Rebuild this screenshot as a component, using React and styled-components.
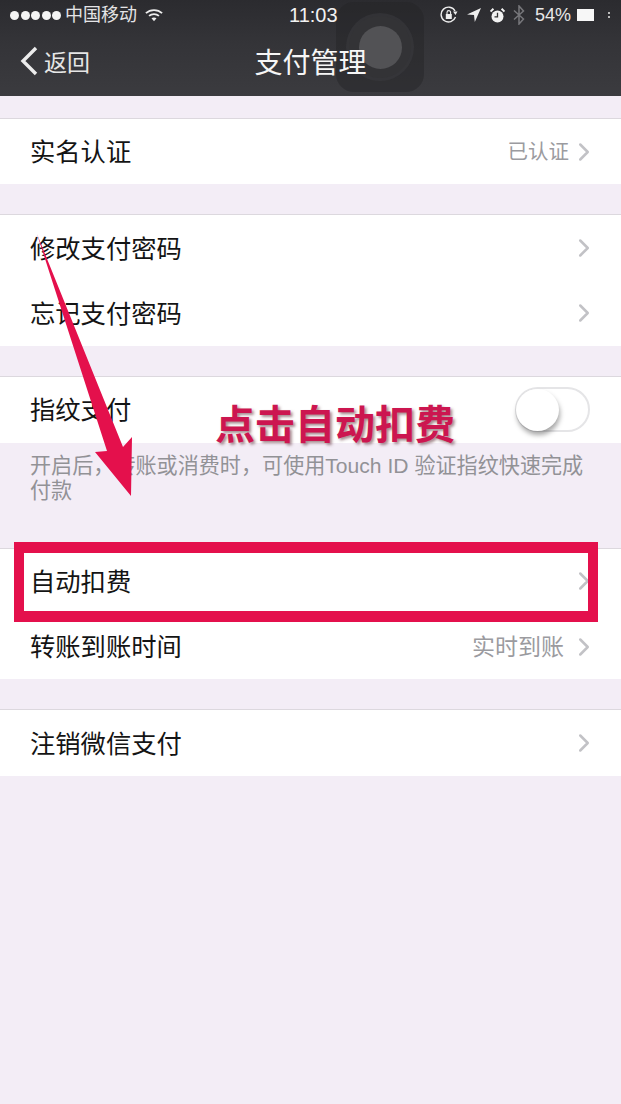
import React from 'react';
import styled, { createGlobalStyle } from 'styled-components';
import { ChevronRight } from 'lucide-react';

const GlobalStyle = createGlobalStyle`
  html, body {
    margin: 0;
    padding: 0;
    background: #f3edf6;
  }
  * {
    box-sizing: border-box;
  }
`;

const Page = styled.div`
  position: relative;
  width: 621px;
  height: 1104px;
  overflow: hidden;
  background: #f3edf6;
  font-family: "Liberation Sans", "Noto Sans CJK SC", sans-serif;
`;

const Header = styled.header`
  height: 96px;
  background: linear-gradient(180deg, #2b2b2f 0%, #343438 45%, #3b3b3f 100%);
  color: #fff;
`;

const StatusBar = styled.div`
  position: relative;
  z-index: 2;
  display: flex;
  align-items: center;
  height: 30px;
  padding: 0 11px 0 10px;
`;

const StatusLeft = styled.div`
  display: flex;
  align-items: center;
  width: 279px;
`;

const StatusRight = styled.div`
  display: flex;
  align-items: center;
  flex: 1;
  justify-content: flex-end;
`;

const Dots = styled.div`
  display: flex;
  gap: 1.5px;
  margin-right: 4px;
`;

const Dot = styled.span`
  width: 9px;
  height: 9px;
  border-radius: 50%;
  background: #f4f4f4;
`;

const Carrier = styled.span`
  font-size: 18px;
  line-height: 30px;
  color: #e4e4e6;
  margin-right: 8px;
`;

const Time = styled.span`
  font-size: 20px;
  color: #f2f2f2;
`;

const Percent = styled.span`
  font-size: 18px;
  color: #e8e8e8;
  margin: 0 6px 0 10px;
`;

const StatusIcon = styled.svg`
  display: block;
  margin-left: ${(p) => p.$gap || 0}px;
`;

const BatteryFill = styled.span`
  width: 17px;
  height: 12px;
  background: #f7f7f7;
`;

const BatteryTip = styled.span`
  width: 3px;
  height: 6px;
  margin-left: 13px;
  border-right: 2px dotted #bbb;
`;

const NavBar = styled.div`
  position: relative;
  z-index: 2;
  display: flex;
  align-items: center;
  justify-content: center;
  height: 66px;
  padding-bottom: 5px;
`;

const BackLink = styled.div`
  position: absolute;
  left: 20px;
  top: 0;
  height: 61px;
  display: flex;
  align-items: center;
  gap: 6px;
  font-size: 23px;
  color: #e6e6e6;
`;

const Title = styled.h1`
  margin: 0;
  font-size: 28px;
  font-weight: 400;
  color: #f6f6f6;
`;

const Content = styled.main`
  padding-top: 22px;
`;

const Group = styled.section`
  background: #fff;
  border-top: 1px solid #dcd8de;
  margin-bottom: ${(p) => p.$gap ?? 30}px;
`;

const Row = styled.div`
  display: flex;
  align-items: center;
  justify-content: space-between;
  height: 65.4px;
  padding: 0 28px 3px 30px;
  font-size: 25.3px;
  color: #141414;
`;

const RowValue = styled.div`
  display: flex;
  align-items: center;
  gap: ${(p) => p.$gap ?? 5}px;
  font-size: ${(p) => p.$size ?? 23}px;
  color: #9b9b9f;
`;

const Chevron = styled(ChevronRight)`
  color: #c2c2c6;
  margin-right: -6px;
  margin-top: 3px;
`;

const Hint = styled.p`
  margin: 0;
  padding: 10px 36px 0 30px;
  height: 105px;
  font-size: 21.1px;
  line-height: 25px;
  color: #929296;
`;

const Toggle = styled.div`
  position: relative;
  width: 75px;
  height: 45px;
  margin: 3px 3px 0 0;
  border: 2px solid #e5e5e7;
  border-radius: 23px;
  background: #fff;
`;

const Knob = styled.span`
  position: absolute;
  left: -1px;
  top: 0;
  width: 43px;
  height: 42px;
  border-radius: 50%;
  background: #fff;
  box-shadow: 1px 4px 5px rgba(0, 0, 0, 0.35);
`;

const TouchButton = styled.div`
  position: absolute;
  z-index: 1;
  left: 336px;
  top: 2px;
  width: 88px;
  height: 90px;
  border-radius: 18px;
  display: flex;
  align-items: center;
  justify-content: center;
  background: rgba(35, 35, 37, 0.45);
`;

const TouchRing = styled.div`
  width: 62px;
  height: 62px;
  border-radius: 50%;
  display: flex;
  align-items: center;
  justify-content: center;
  background: #333336;
  box-shadow: 0 0 0 3px rgba(62, 62, 66, 0.45);
`;

const TouchCore = styled.div`
  width: 43px;
  height: 43px;
  border-radius: 50%;
  background: #525255;
`;

const HighlightBox = styled.div`
  position: absolute;
  left: 14px;
  top: 542px;
  width: 584px;
  height: 80px;
  border: solid #e4104c;
  border-width: 11px 10px;
`;

const Callout = styled.div`
  position: absolute;
  left: 215px;
  top: 396px;
  font-size: 40px;
  font-weight: 700;
  line-height: 58px;
  white-space: nowrap;
  color: #cc1650;
  text-shadow: 2px 2px 3px rgba(90, 40, 50, 0.55);
`;

const ArrowLayer = styled.svg`
  position: absolute;
  left: 0;
  top: 0;
`;

const Wifi = () => (
  <StatusIcon width="18" height="14" viewBox="0 0 20 15">
    <path d="M1 5.5C6 .8 14 .8 19 5.5" fill="none" stroke="#eee" strokeWidth="2" />
    <path d="M4.5 8.5c3-2.6 8-2.6 11 0" fill="none" stroke="#eee" strokeWidth="2" />
    <path d="M7.2 11.2c1.6-1.3 4-1.3 5.6 0L10 14.5z" fill="#eee" />
  </StatusIcon>
);

const RotationLock = () => (
  <StatusIcon width="18" height="18" viewBox="0 0 18 18">
    <path d="M15.5 11A7.4 7.4 0 1 1 15 5" fill="none" stroke="#eee" strokeWidth="1.4" />
    <path d="M13 5.5h4.5L15.5 9z" fill="#eee" />
    <rect x="5.8" y="8" width="6" height="5" fill="#eee" />
    <path d="M7 8V6.4a1.8 1.8 0 0 1 3.6 0V8" fill="none" stroke="#eee" strokeWidth="1.1" />
  </StatusIcon>
);

const Location = () => (
  <StatusIcon $gap={9} width="14" height="14" viewBox="0 0 14 14">
    <path d="M14 0 0 6.5l7 .6.8 6.9z" fill="#eee" />
  </StatusIcon>
);

const Alarm = () => (
  <StatusIcon $gap={9} width="15" height="15" viewBox="0 0 15 15">
    <circle cx="7.5" cy="8.5" r="6" fill="#f2f2f2" />
    <path d="M7.5 4.8v4h-3" fill="none" stroke="#333" strokeWidth="1.3" />
    <path d="M.5 3.6 3.4.8M14.5 3.6 11.6.8" stroke="#f2f2f2" strokeWidth="2" />
  </StatusIcon>
);

const Bluetooth = () => (
  <StatusIcon $gap={8} width="12" height="20" viewBox="0 0 12 20">
    <path d="M1 5.5 10.5 14 6 19V1l4.5 5L1 14.5" fill="none" stroke="#77777b" strokeWidth="1.5" />
  </StatusIcon>
);

const BackChevron = () => (
  <svg width="18" height="30" viewBox="0 0 18 30">
    <path d="M16 2 3 15l13 13" fill="none" stroke="#ececec" strokeWidth="3.4" />
  </svg>
);

const RowChevron = () => <Chevron size={30} strokeWidth={2} />;

const App = () => {
  return (
    <Page>
      <GlobalStyle />
      <Header>
        <StatusBar>
          <StatusLeft>
            <Dots>
              <Dot />
              <Dot />
              <Dot />
              <Dot />
              <Dot />
            </Dots>
            <Carrier>中国移动</Carrier>
            <Wifi />
          </StatusLeft>
          <Time>11:03</Time>
          <StatusRight>
            <RotationLock />
            <Location />
            <Alarm />
            <Bluetooth />
            <Percent>54%</Percent>
            <BatteryFill />
            <BatteryTip />
          </StatusRight>
        </StatusBar>
        <NavBar>
          <BackLink>
            <BackChevron />
            返回
          </BackLink>
          <Title>支付管理</Title>
        </NavBar>
      </Header>
      <Content>
        <Group>
          <Row>
            实名认证
            <RowValue $size={20.5} $gap={0}>
              已认证
              <RowChevron />
            </RowValue>
          </Row>
        </Group>
        <Group>
          <Row>
            修改支付密码
            <RowValue>
              <RowChevron />
            </RowValue>
          </Row>
          <Row>
            忘记支付密码
            <RowValue>
              <RowChevron />
            </RowValue>
          </Row>
        </Group>
        <Group $gap={0}>
          <Row>
            指纹支付
            <Toggle>
              <Knob />
            </Toggle>
          </Row>
        </Group>
        <Hint>开启后，转账或消费时，可使用Touch ID 验证指纹快速完成付款</Hint>
        <Group>
          <Row>
            自动扣费
            <RowValue>
              <RowChevron />
            </RowValue>
          </Row>
          <Row>
            转账到账时间
            <RowValue>
              实时到账
              <RowChevron />
            </RowValue>
          </Row>
        </Group>
        <Group>
          <Row>
            注销微信支付
            <RowValue>
              <RowChevron />
            </RowValue>
          </Row>
        </Group>
      </Content>
      <TouchButton>
        <TouchRing>
          <TouchCore />
        </TouchRing>
      </TouchButton>
      <HighlightBox />
      <ArrowLayer width="621" height="1104" viewBox="0 0 621 1104">
        <polygon points="37,234 123,447 132,437 131,496 95,452 107,451" fill="#e4104c" />
      </ArrowLayer>
      <Callout>点击自动扣费</Callout>
    </Page>
  );
};

export default App;
